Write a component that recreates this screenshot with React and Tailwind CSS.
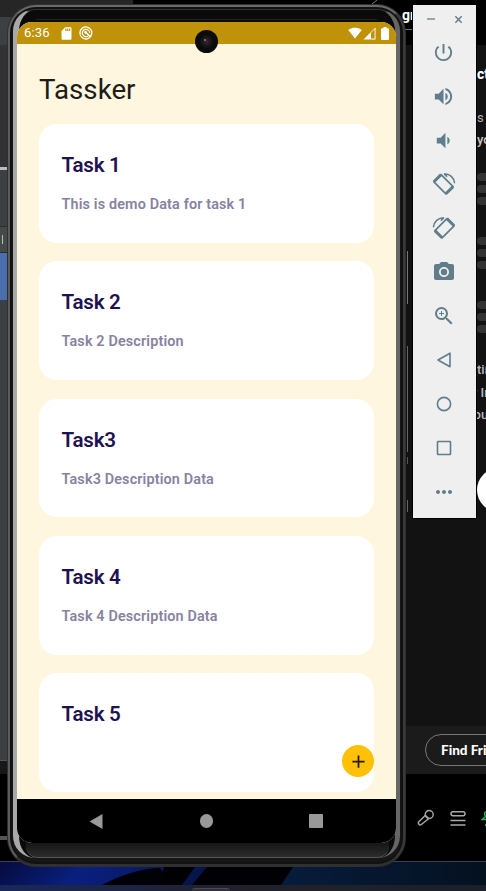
import React from "react";
import {
  MdPowerSettingsNew, MdVolumeUp, MdVolumeDown, MdCameraAlt, MdZoomIn, MdMoreHoriz, MdSdCard,
  MdSignalWifi4Bar, MdBatteryFull, MdAdd,
} from "react-icons/md";

const tasks = [
  { title: "Task 1", text: "This is demo Data for task 1" },
  { title: "Task 2", text: "Task 2 Description" },
  { title: "Task3", text: "Task3 Description Data" },
  { title: "Task 4", text: "Task 4 Description Data" },
  { title: "Task 5", text: "" },
];

function RotateIcon({ flip }) {
  return (
    <svg viewBox="0 0 24 24" className={flip ? "size-6 -scale-x-100" : "size-6"} fill="none" stroke="currentColor">
      <path d="M9.1 2.6 1.9 9.8l12 12 7.2-7.2z" strokeWidth="1.7" strokeLinejoin="round" />
      <path d="M9.1 2.6 1.9 9.8M21.1 14.6l-7.2 7.2" strokeWidth="3" />
      <path d="M12 1.7c5.800 0 10.200 3.900 10.600 9.600M12 1.700l3.200 2.900" strokeWidth="1.5" />
    </svg>
  );
}

function Outline({ children }) {
  return (
    <svg viewBox="0 0 16 16" className="size-4" fill="none" stroke="currentColor" strokeWidth="1.6" strokeLinejoin="round">
      {children}
    </svg>
  );
}

function Toolbar() {
  const items = [
    <MdPowerSettingsNew className="size-[23px]" />,
    <MdVolumeUp className="size-[23px]" />,
    <MdVolumeDown className="size-[23px]" />,
    <RotateIcon />,
    <RotateIcon flip />,
    <MdCameraAlt className="size-6" />,
    <MdZoomIn className="size-6" />,
    <Outline><path d="M14 1.200v13.600L2 8z" /></Outline>,
    <Outline><circle cx="8" cy="8" r="6.600" /></Outline>,
    <Outline><rect x="1.500" y="1.500" width="13" height="13" rx="0.500" /></Outline>,
    <MdMoreHoriz className="size-6" />,
  ];
  return (
    <aside className="absolute left-[413px] top-[5px] flex h-[513px] w-[63px] flex-col bg-[#efefef] text-[#607d8b] outline outline-1 outline-black">
      <div className="flex h-[25px] items-center justify-between pl-[14px] pr-[13px] pt-[3px]">
        <span className="h-[1.500px] w-2 bg-[#94a7b0]" />
        <svg viewBox="0 0 10 10" className="size-[9px]" stroke="currentColor" strokeWidth="1.600">
          <path d="M1.500 1.500l7 7M8.500 1.500l-7 7" />
        </svg>
      </div>
      {items.map((icon, i) => (
        <div key={i} className="flex h-11 shrink-0 items-center justify-center pr-[1.500px]">{icon}</div>
      ))}
    </aside>
  );
}

function StatusBar() {
  return (
    <div className="flex h-[22px] shrink-0 items-center bg-[#bf9209] pl-[7px] pr-[4px] text-white">
      <span className="w-[35px] text-[13.200px] leading-none tracking-[0.100px]">6:36</span>
      <MdSdCard className="size-[15px]" />
      <svg viewBox="0 0 14 14" className="ml-[5px] size-[14px]" fill="none" stroke="currentColor">
        <path d="M12.800 8.200A6 6 0 1 1 12.700 5.300c.4 1.900-.2 3.600-1.300 4.600" strokeWidth="1.300" />
        <path d="M9.200 10A3.700 3.700 0 1 1 10.700 7" strokeWidth="1.200" />
        <path d="M6.300 5.700l5.300 5.300" strokeWidth="1.600" />
        <circle cx="6.500" cy="6.300" r="1" fill="currentColor" />
      </svg>
      <div className="ml-auto flex items-center">
        <MdSignalWifi4Bar className="size-[14px]" />
        <svg viewBox="0 0 13 13" className="ml-[1px] size-[13px]" fill="none">
          <path d="M.5 12.500h12V.5z" fill="currentColor" />
          <path d="M8 5.800l3.600-3.600v9.400H8z" fill="#bf9209" />
        </svg>
        <svg viewBox="0 0 8 13" className="ml-[5px] mr-[3px] h-[13px] w-2" fill="currentColor">
          <path d="M2.500 0h3v1.200H7q1 0 1 1V12q0 1-1 1H1q-1 0-1-1V2.200q0-1 1-1h1.500z" />
        </svg>
      </div>
    </div>
  );
}

function Phone() {
  return (
    <section className="absolute left-[7px] top-[4px] flex h-[863px] w-[399px] rounded-[29px] bg-[#2f2f2f] p-px">
      <div className="flex flex-1 rounded-[28px] border-2 border-b-[#303030] border-l-[#5c5c5c] border-r-[#3a3a3a] border-t-[#6a6a6a] bg-[#111111] p-[2px]">
        <div className="relative flex flex-1 flex-col overflow-hidden rounded-[22px] bg-[#161616] px-[5px] pb-[19px] pt-[13px]">
          <div className="absolute bottom-[4px] left-px right-px top-0 rounded-[22px] border-l-[6px] border-r-[5px] border-t border-l-[#a8a8a8] border-r-[#666666] border-t-[#333333] bg-[#0a0a0a]" />
          <div className="absolute inset-x-[24px] top-[10px] h-px bg-[#222222]" />
          <div className="absolute bottom-[4px] left-[14px] right-[12px] h-9 rounded-b-[12px] border-b border-[#555555] bg-linear-to-b from-[#101010] from-[48%] to-[#2c2c2c]" />
          <div className="relative flex w-[379px] flex-1 flex-col overflow-hidden rounded-[15px] bg-[#fef6df]">
            <StatusBar />
            <main className="relative flex min-h-0 flex-1 flex-col px-[22px] pt-[25px]">
              <h1 className="h-[55px] pt-[3px] text-[27.700px] leading-9 text-[#1d1c17]">Tassker</h1>
              <div className="flex flex-col gap-[18.500px]">
                {tasks.map((task) => (
                  <article key={task.title} className="h-[118.800px] w-[335px] shrink-0 rounded-[18px] bg-white px-[22.500px] pt-[28px]">
                    <h2 className="text-[20.600px] font-semibold leading-[26px] tracking-[-0.250px] text-[#1f1251]">{task.title}</h2>
                    <p className="mt-[17px] text-[14.400px] font-semibold leading-5 tracking-[0.140px] text-[#88829f]">{task.text}</p>
                  </article>
                ))}
              </div>
              <button className="absolute bottom-[22px] right-[22px] flex size-[32px] items-center justify-center rounded-full bg-[#ffc008] text-[#251a00]">
                <MdAdd className="size-[21px]" />
              </button>
            </main>
            <nav className="flex h-11 shrink-0 items-center bg-black text-[#999999]">
              <svg viewBox="0 0 14 15" className="ml-[72px] h-[15px] w-[14px]" fill="currentColor">
                <path d="M.5 7.500 13.500 0v15z" />
              </svg>
              <span className="ml-[96.500px] size-[13.500px] rounded-full bg-[#999999]" />
              <span className="ml-[95.500px] size-[14px] rounded-[1px] bg-[#999999]" />
            </nav>
          </div>
        </div>
      </div>
      <div className="absolute left-[188px] top-[26px] flex size-[23px] items-center justify-center rounded-full bg-[#0b0b0b]">
        <div className="size-[13px] rounded-full bg-radial from-[#3b2830] via-[#171517] to-[#0b0b0b]">
          <div className="ml-[4px] mt-[4px] size-[2px] rounded-full bg-[#8d8089]" />
        </div>
      </div>
    </section>
  );
}

function EditorEdge() {
  return (
    <div className="flex h-[861px] w-4 shrink-0 flex-col bg-black">
      <div className="h-[17px] bg-[#262626]" />
      <div className="h-[28px] bg-[#3c4043]" />
      <div className="h-[122px] bg-[#323234]" />
      <div className="h-[3px] bg-[#b9bdc1]" />
      <div className="h-[57px] border-b border-[#2a2c2d] bg-[#3c4043]" />
      <div className="flex h-[26px] items-center border-b border-[#2a2c2d] bg-[#46494a]">
        <span className="ml-[2px] h-[9px] w-px bg-[#a9c9a4]" />
      </div>
      <div className="h-[47px] bg-[#4b6eaf]" />
      <div className="h-[461px] border-b border-[#555555] bg-[#3c4043]" />
      <div className="h-[13px] bg-[#181818]" />
      <div className="h-[62px]" />
      <div className="h-[4px] bg-[#555555]" />
    </div>
  );
}

function Placeholder() {
  return (
    <div className="flex flex-col gap-[4px]">
      <span className="h-2 w-8 rounded-full bg-[#333333]" />
      <span className="h-2 w-8 rounded-full bg-[#333333]" />
      <span className="h-2 w-8 rounded-full bg-[#333333]" />
    </div>
  );
}

function MusicApp() {
  return (
    <div className="flex h-[861px] w-[90px] shrink-0 flex-col overflow-hidden bg-black text-white">
      <div className="relative h-[45px] shrink-0">
        <svg viewBox="0 0 90 45" className="h-[45px] w-[90px]" fill="none" stroke="#777777">
          <path d="M5 29.500h12" />
        </svg>
        <span className="absolute left-[6px] top-[5px] text-[14px] font-bold">gr</span>
      </div>
      <div className="flex h-[681px] shrink-0 bg-[#121212]">
        <div className="flex w-[12px] flex-col pt-[206px]">
          <span className="h-[53px] w-[12px] border-r border-[#777777]" />
          <span className="mt-[42px] h-[106px] w-[12px] border-r border-[#666666]" />
          <span className="mt-[5px] h-[7px] w-[12px] border-r border-[#555555]" />
          <span className="mt-[36px] h-[12px] w-[12px] border-r border-[#666666]" />
        </div>
        <div className="ml-[69px] flex w-[9px] shrink-0 flex-col whitespace-nowrap">
          <span className="mt-[19px] h-[20px] text-[14px] font-extrabold leading-5">ct</span>
          <span className="mt-[23px] h-[22px] text-[13px] leading-[22px] text-[#b3b3b3]">s a</span>
          <span className="h-[22px] text-[13px] font-medium leading-[22px] text-[#c9c9c9]">yo</span>
          <div className="mt-[22px] flex flex-col gap-8">
            <Placeholder />
            <Placeholder />
            <Placeholder />
          </div>
          <div className="mt-[26px] text-[13px] font-medium leading-[22.500px] text-[#b8b8b8]">
            <p>tin</p>
            <p className="-ml-[6px]">y In</p>
            <p className="-ml-[8px]">fou</p>
          </div>
          <span className="mt-[41px] size-[44px] shrink-0 rounded-full bg-white" />
        </div>
      </div>
      <div className="flex h-[48px] shrink-0 items-center bg-[#1b1b1b] pl-[29px]">
        <div className="flex h-[32px] w-[110px] shrink-0 items-center whitespace-nowrap rounded-full border border-[#777777] pl-[15px] font-['Lato',sans-serif] text-[13.500px] font-black">
          Find Friends
        </div>
      </div>
      <div className="flex h-[87px] shrink-0 items-center gap-4 pl-[21px] text-[#a9a9a9]">
        <svg viewBox="0 0 18 18" className="size-[18px] shrink-0" fill="none" stroke="currentColor" strokeWidth="1.400">
          <circle cx="12.200" cy="5.500" r="4" />
          <path d="M8.400 6.200 1.800 12.800c-1.300 1.500.9 4 2.500 2.700l7.600-6M8.400 6.200l3.500 3.500" />
        </svg>
        <svg viewBox="0 0 16 16" className="-ml-px size-4 shrink-0" fill="none" stroke="currentColor" strokeWidth="1.500">
          <rect x="1" y="1.800" width="14" height="4" rx="2" />
          <path d="M.5 10.500h15M.5 15h15" />
        </svg>
        <svg viewBox="0 0 14 16" className="-ml-px h-4 w-[14px] shrink-0" fill="none" stroke="#20b455" strokeWidth="1.400">
          <path d="M6 1.500C2 2 4 5 4.500 6.500L1 9.500h7M4 15h7" />
        </svg>
      </div>
    </div>
  );
}

export default function App() {
  return (
    <div className="relative flex h-[891px] w-[486px] flex-col overflow-hidden bg-[#121212] font-['Roboto',sans-serif]">
      <div className="flex h-[861px] shrink-0">
        <EditorEdge />
        <div className="flex w-[380px] flex-col">
          <div className="flex h-[45px] bg-black">
            <div className="w-[117px] bg-[#262626]" />
            <svg viewBox="0 0 263 45" className="h-[45px] w-[263px]" fill="none" stroke="#777777">
              <path d="M239 4l5-4" />
            </svg>
          </div>
          <div className="flex-1 bg-black" />
        </div>
        <MusicApp />
      </div>
      <svg viewBox="0 0 486 24" className="h-6 w-full shrink-0">
        <defs>
          <linearGradient id="petal" x1="0" x2="1" y1="0" y2="0.150">
            <stop stopColor="#050b3c" />
            <stop offset="0.550" stopColor="#0a2080" />
            <stop offset="1" stopColor="#08185f" />
          </linearGradient>
          <linearGradient id="night" x1="0" x2="1">
            <stop stopColor="#071c3c" />
            <stop offset="1" stopColor="#04111f" />
          </linearGradient>
        </defs>
        <path d="M0 0h486v24H0z" fill="#010105" />
        <path d="M0 0h165l-5 24H0z" fill="url(#petal)" />
        <path d="M102 24C119 15 141 7 160 7q6 5 3 17z" fill="#010207" />
        <path d="M182 24l13-18h12l-15 18z" fill="#08154c" />
        <path d="M281 24 297 0h189v24z" fill="url(#night)" />
        <path d="M0 .5h486" stroke="#394252" />
      </svg>
      <div className="flex h-[6px] shrink-0 bg-linear-to-r from-[#19275a] via-[#21202a] to-[#1b202b] pl-[192px] pt-[3px]">
        <span className="h-[3px] w-[38px] rounded-t-[3px] border-t border-[#4a4853] bg-[#343039]" />
      </div>
      <Phone />
      <Toolbar />
    </div>
  );
}
